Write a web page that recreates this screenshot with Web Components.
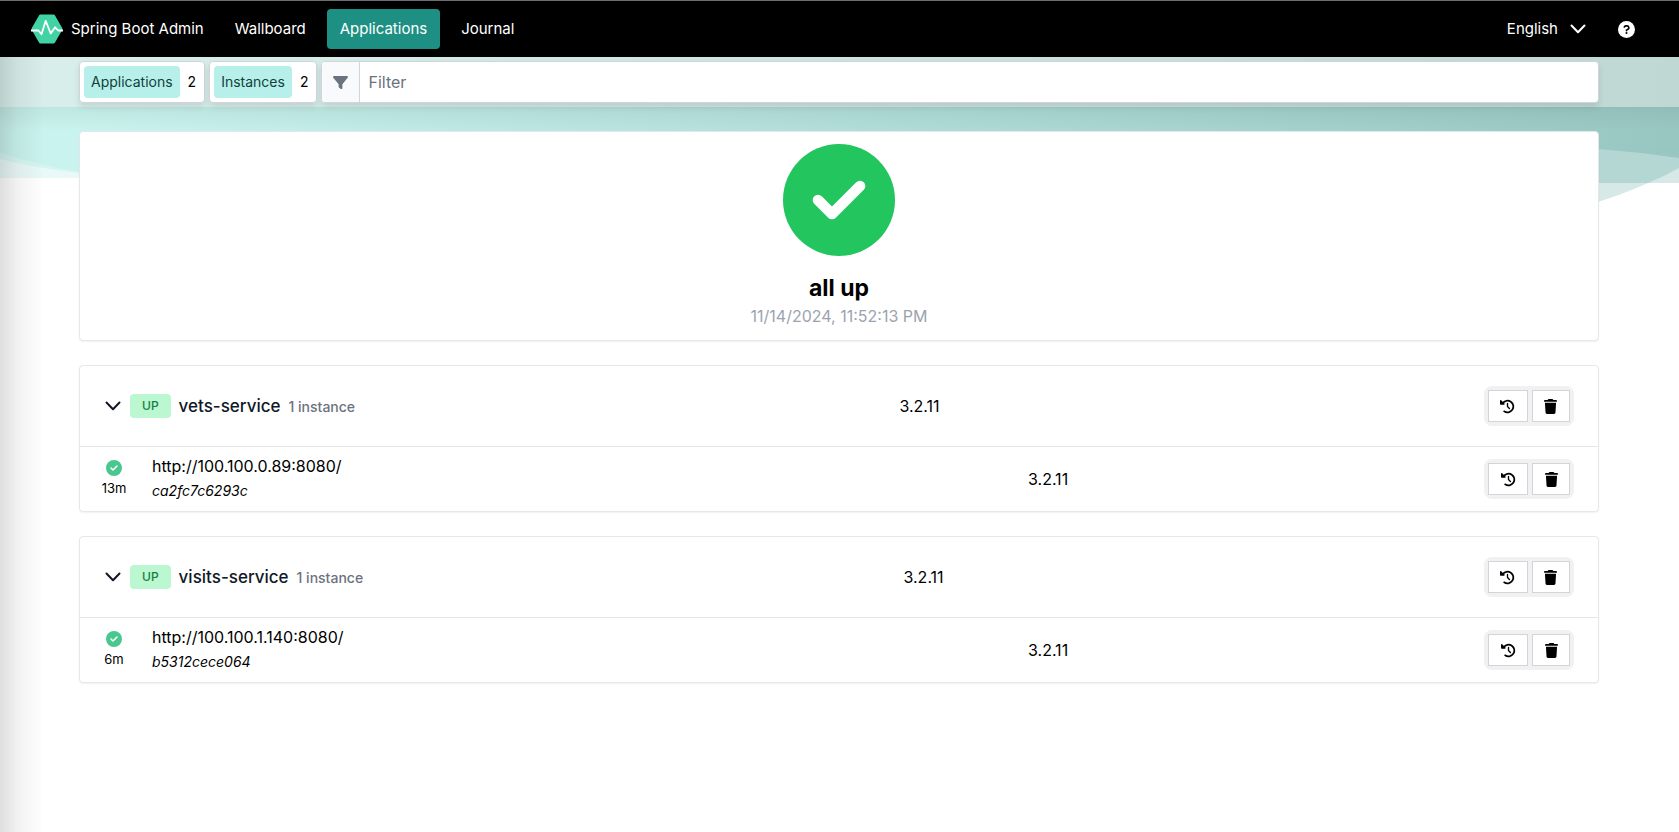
<!DOCTYPE html>
<html lang="en">
<head>
<meta charset="utf-8">
<title>Spring Boot Admin</title>
<style>
  html, body { margin: 0; min-height: 100%; background: #fff; }
  body { font-family: Inter, "Liberation Sans", sans-serif; font-size: 16px; line-height: 24px; color: #000; }
</style>
</head>
<body>
<sba-app></sba-app>
<script>
const icons = {
  logo: '<svg viewBox="0 0 32 32" width="32" height="32"><path fill="#42d3a5" d="M9.500 1.500h13q1 0 1.500.9l7.200 12.700q.5.900 0 1.800l-7.200 12.700q-.5.900-1.500.9h-13q-1 0-1.500-.9L.8 16.900q-.5-.9 0-1.800L8 2.400q.5-.9 1.500-.9z"/><path fill="none" stroke="#fff" stroke-width="1.800" stroke-linejoin="round" d="M0 17.500h7.500l3 3.800 4.200-13.500 5 12.700 4.400-6.200 3 3.200H32"/></svg>',
  chevron: '<svg viewBox="0 0 16 10" width="16" height="10"><path fill="none" stroke="currentColor" stroke-width="2" stroke-linecap="round" stroke-linejoin="round" d="M1.500 1.500 8 8.200l6.500-6.700"/></svg>',
  help: '<svg viewBox="0 0 512 512" width="17" height="17"><circle cx="256" cy="256" r="256" fill="#fff"/><path fill="none" stroke="#000" stroke-width="50" stroke-linecap="round" stroke-linejoin="round" d="M190 178c8-22 26-30 44-30h38c55 0 76 70 30 98l-46 28v18"/><circle cx="256" cy="362" r="31"/></svg>',
  filter: '<svg viewBox="0 0 512 512" width="15" height="15"><path fill="#6b7280" d="M4 54C9 41 23 32 40 32h432c17 0 31 9 36 22s4 29-8 41L320 312v136c0 12-7 23-18 29s-24 4-34-3l-64-48c-8-6-12-16-12-26v-88L10 95C-1 82-4 67 4 54z"/></svg>',
  check: '<svg viewBox="0 0 512 512" width="100%" height="100%"><circle cx="256" cy="256" r="256" fill="currentColor"/><path fill="none" stroke="#fff" stroke-width="49" stroke-linecap="round" stroke-linejoin="round" d="m160 256 64 64 128-128"/></svg>',
  history: '<svg viewBox="0 0 512 512" width="15" height="15"><path fill="none" stroke="#000" stroke-width="60" stroke-linecap="round" stroke-linejoin="round" d="M90 145A200 200 0 1 1 142 421"/><path d="M24 32c-15 0-24 12-24 24v112c0 13 11 24 24 24h112c21 0 32-26 17-41L41 39c-5-5-11-7-17-7z"/><path fill="none" stroke="#000" stroke-width="46" stroke-linecap="round" stroke-linejoin="round" d="M256 152v104l66 68"/></svg>',
  trash: '<svg viewBox="0 0 448 512" width="13" height="15"><path d="M135 18 128 32H32a32 32 0 0 0 0 64h384a32 32 0 0 0 0-64h-96l-7-14c-6-11-17-18-29-18H164c-12 0-23 7-29 18zM416 128H32l21 339c2 25 23 45 48 45h246c25 0 46-20 48-45z"/></svg>'
};
function element(name, css, html, ready) {
  customElements.define(name, class extends HTMLElement {
    constructor() {
      super();
      this.attachShadow({ mode: "open" });
    }
    connectedCallback() {
      const t = document.createElement("template");
      t.innerHTML = `<style>*{box-sizing:border-box}svg{display:block;flex:none}${css}</style>` + html;
      this.shadowRoot.replaceChildren(t.content.cloneNode(true));
      if (ready) ready(this.shadowRoot, this);
    }
  });
}

element("sba-icon", ":host{display:block;flex:none}", "", (root, host) => {
  root.innerHTML += icons[host.getAttribute("name")];
});

element("sba-backdrop", `
  :host{position:absolute;top:57px;left:0;right:0;height:160px;pointer-events:none;z-index:-1}
  svg{width:100%;height:100%}`,
  `<svg viewBox="0 0 1679 160" preserveAspectRatio="none" aria-hidden="true">
    <defs><linearGradient id="g" x1="0" x2="1"><stop offset="0" stop-color="#c9f3ee"/><stop offset=".05" stop-color="#c9f3ee"/><stop offset="1" stop-color="#98c7c2"/></linearGradient></defs>
    <path fill="#e9f9f8" d="M0 0h800v121H0z"/>
    <path fill="#d6f5f1" d="M0 0h400v130Q180 130 80 116 35 111 0 102z"/>
    <path fill="#d6e9e7" d="M1400 0h279v126h-31q-22 10-50 19l-198 15z"/>
    <path fill="#b5d7d3" d="M1500 0h179v111q-14 8-31 15h-148z"/>
    <path fill="url(#g)" d="M0 0h1679v101q-41-6-81-9L600 130Q200 130 80 115 35 107 0 96z"/>
  </svg>`);

element("sba-nav", `
  :host{display:block;background:#000;color:#fff;border-top:1px solid #6d6d6d;font-size:15px}
  nav{display:flex;align-items:center;height:56px;padding:0 44px 0 31px}
  a{color:inherit;text-decoration:none;display:flex;align-items:center;height:40px;padding:0 13px;border-radius:4px}
  a.brand{padding:0 18px 0 0;gap:8px}
  a.active{background:#1e9083}
  a.help{padding:0}
  .links{display:flex;gap:8px;flex:1}
  button{font:inherit;color:inherit;background:none;border:0;padding:0;display:flex;align-items:center;gap:12px;margin-right:32px}`,
  `<nav><a class="brand" href="#"><sba-icon name="logo"></sba-icon>Spring Boot Admin</a>
    <div class="links"><a href="#wallboard">Wallboard</a><a class="active" href="#applications" aria-current="page">Applications</a><a href="#journal">Journal</a></div>
    <button>English<sba-icon name="chevron"></sba-icon></button>
    <a class="help" href="#about" aria-label="Help"><sba-icon name="help"></sba-icon></a></nav>`);

element("sba-count", `
  :host{display:flex;align-items:center;height:42px;padding:0 4px;box-sizing:border-box;background:#fff;border:1px solid #d1d5db;border-radius:4px;font-size:14px;box-shadow:0 4px 6px rgba(0,0,0,.1)}
  .label{display:flex;align-items:center;height:32px;padding:0 7px;background:#b7f0ea;color:#12403c;border-radius:4px}
  .value{padding:0 4px 0 8px}`,
  `<span class="label"><slot></slot></span><span class="value"><slot name="value"></slot></span>`);

element("sba-filter", `
  :host{display:flex;flex:1;height:42px;box-sizing:border-box;background:#fff;border:1px solid #d1d5db;border-radius:4px;overflow:hidden;box-shadow:0 4px 6px rgba(0,0,0,.1)}
  label{display:flex;align-items:center;justify-content:center;width:38px;background:#f9fafb;border-right:1px solid #d1d5db}
  input{flex:1;min-width:0;border:0;outline:0;padding:0 8px;font:inherit;background:none}
  input::placeholder{color:#6b7280;opacity:1}`,
  `<label for="q" aria-label="Filter"><sba-icon name="filter"></sba-icon></label><input id="q" type="text" placeholder="Filter">`);

element("sba-toolbar", `
  :host{display:flex;gap:4px;padding:4px 80px 4px 79px;background:rgba(232,234,230,.5)}`,
  `<sba-count>Applications<span slot="value">2</span></sba-count><sba-count>Instances<span slot="value">2</span></sba-count><sba-filter></sba-filter>`);

element("sba-card", `
  :host{display:block;background:#fff;border:1px solid #e5e7eb;border-radius:4px;box-shadow:0 1px 2px rgba(0,0,0,.06)}`, `<slot></slot>`);

element("sba-status", `
  :host{display:flex;flex-direction:column;align-items:center;padding:12px}
  .big{width:112px;height:112px;color:#22c55e}
  h1{margin:16px 0 0;font-size:23px;line-height:32px;font-weight:700}
  time{color:#9ca3af}
  sba-icon{width:100%;height:100%}`,
  `<div class="big"><sba-icon name="check"></sba-icon></div><h1>all up</h1><time>11/14/2024, 11:52:13 PM</time>`);

element("sba-actions", `
  :host{display:flex;flex:none;width:fit-content;box-sizing:border-box;gap:4px;padding:4px;border-radius:8px;background:#f1f1f1}
  button{display:flex;align-items:center;justify-content:center;width:40px;height:32px;padding:0;background:#fff;border:1px solid #d1d5db}
  button+button{width:38px}`,
  `<button aria-label="Journal"><sba-icon name="history"></sba-icon></button><button aria-label="Unregister"><sba-icon name="trash"></sba-icon></button>`);

element("sba-application", `
  :host{display:block}
  header{display:flex;align-items:center;justify-content:space-between;height:81px;padding:0 24px;border-bottom:1px solid #e5e7eb}
  .title{display:flex;align-items:center;gap:8px;color:#111827}
  .title button{border:0;background:none;padding:0 1px;color:inherit}
  .badge{display:flex;align-items:center;height:24px;padding:0 12px;border-radius:4px;background:#bbf7d0;color:#15803d;font-size:12px;font-weight:500}
  .name{display:flex;align-items:baseline;gap:8px}
  h2{margin:0;font-size:17px;line-height:28px;font-weight:500}
  small{font-size:14px;font-weight:500;color:#6b7280}
  table{width:100%;height:64px;border-collapse:collapse;table-layout:fixed}
  td{padding:0}
  .state{width:72px;padding-right:4px}
  .stack{display:flex;flex-direction:column;align-items:center;gap:2px;font-size:13px;line-height:20px}
  .stack sba-icon{width:16px;height:16px;color:#48c78e}
  .version{width:456px}
  .act{width:114px}
  a{color:inherit;text-decoration:none;display:block}
  em{display:block;font-size:14px;line-height:26px}`,
  `<header><div class="title"><button aria-label="Collapse"><sba-icon name="chevron"></sba-icon></button><span class="badge">UP</span><div class="name"><h2></h2><small>1 instance</small></div></div><span>3.2.11</span><sba-actions></sba-actions></header>
  <table><tr><td class="state"><div class="stack"><sba-icon name="check"></sba-icon><span class="age"></span></div></td><td><a href="#instance"></a><em></em></td><td class="version">3.2.11</td><td class="act"><sba-actions></sba-actions></td></tr></table>`,
  (root, host) => {
    root.querySelector("h2").textContent = host.getAttribute("name");
    root.querySelector(".age").textContent = host.getAttribute("age");
    root.querySelector("a").textContent = host.getAttribute("url");
    root.querySelector("em").textContent = host.getAttribute("instance");
  });

element("sba-app", `
  :host{display:block;position:relative;z-index:0;min-height:100vh}
  .shade{position:absolute;top:57px;bottom:0;left:0;width:45px;background:linear-gradient(90deg,rgba(0,0,0,.13),rgba(0,0,0,.05) 40%,rgba(0,0,0,0));pointer-events:none}
  main{display:flex;flex-direction:column;gap:24px;padding:24px 80px 24px 79px;background:linear-gradient(rgba(0,0,0,.05),rgba(0,0,0,0) 24px)}`,
  `<sba-backdrop></sba-backdrop><sba-nav></sba-nav><sba-toolbar></sba-toolbar>
  <main><sba-card><sba-status></sba-status></sba-card>
  <sba-card><sba-application name="vets-service" age="13m" url="http://100.100.0.89:8080/" instance="ca2fc7c6293c"></sba-application></sba-card>
  <sba-card><sba-application name="visits-service" age="6m" url="http://100.100.1.140:8080/" instance="b5312cece064"></sba-application></sba-card></main>
  <div class="shade"></div>`);
</script>
</body>
</html>
